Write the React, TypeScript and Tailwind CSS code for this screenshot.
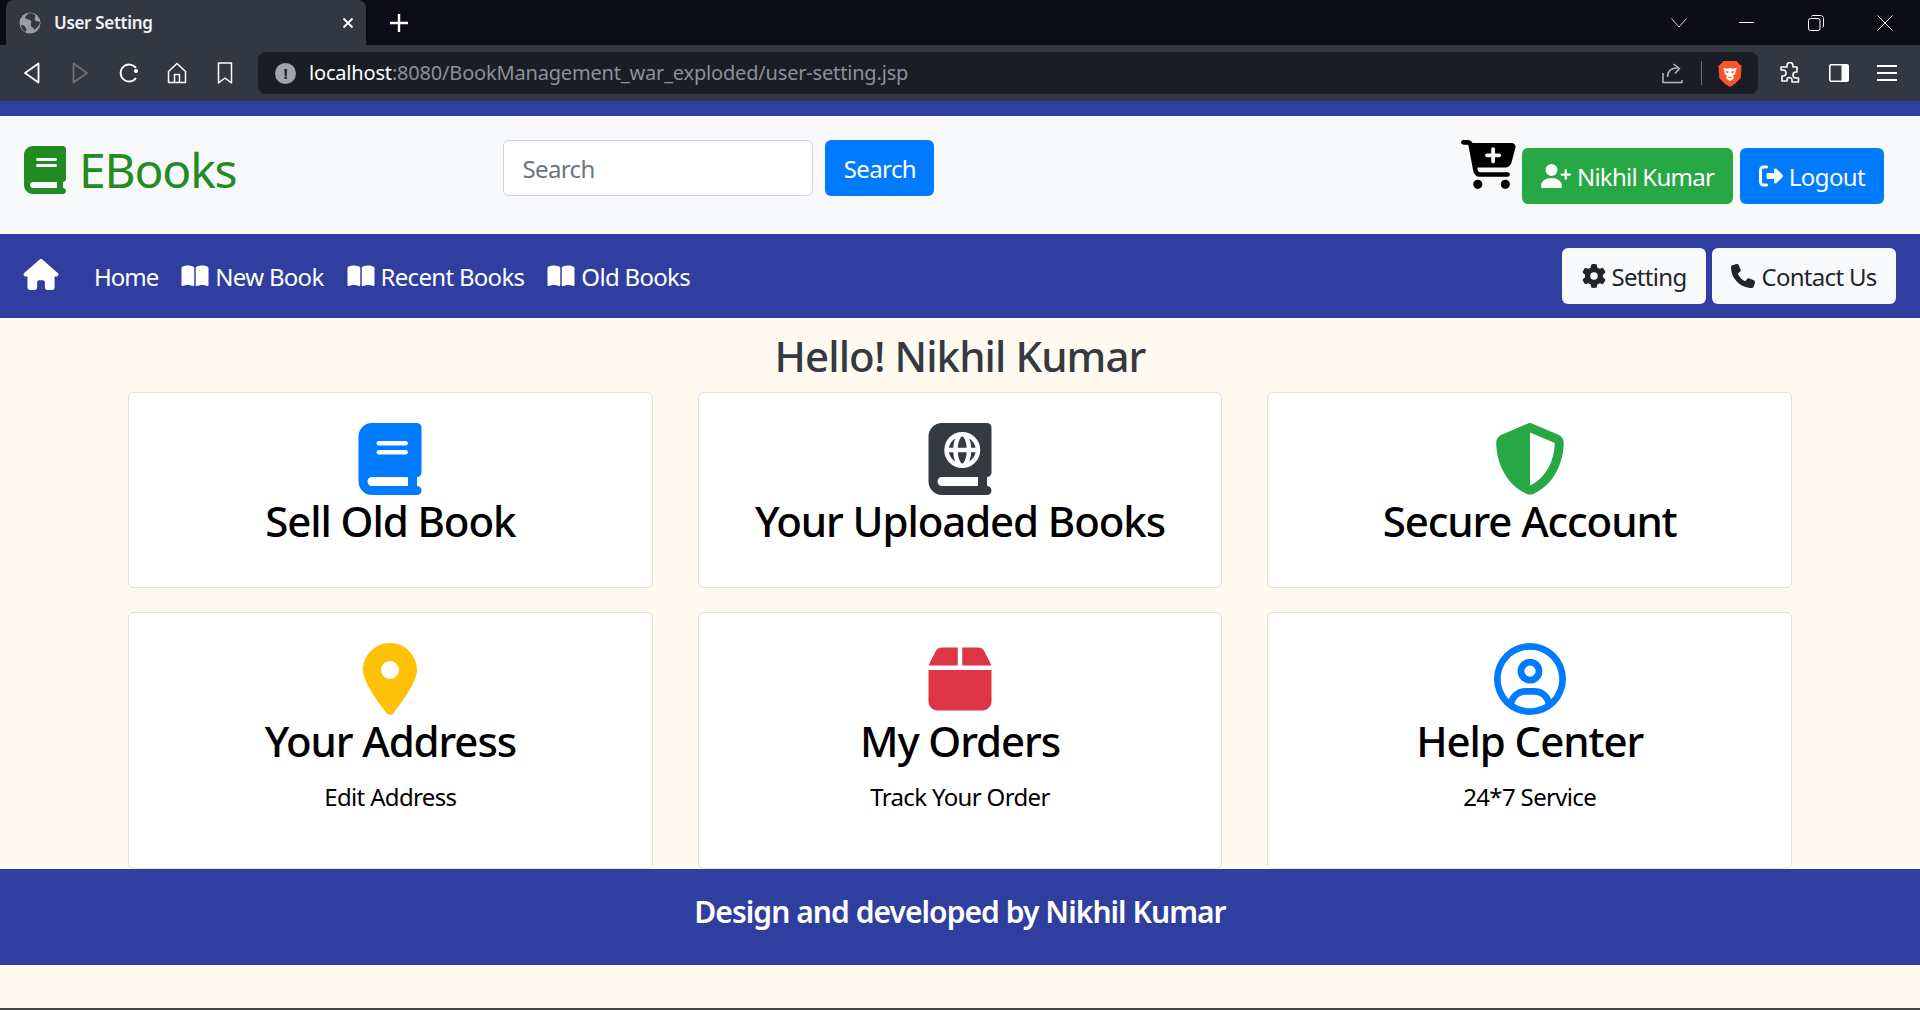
import React from 'react';
import {
  FaBook, FaBookAtlas, FaBookOpen, FaBox, FaCartPlus, FaGear, FaHouse, FaLocationDot, FaPhone,
  FaRegCircleUser, FaRightFromBracket, FaShieldHalved, FaUserPlus,
} from 'react-icons/fa6';

const NAV_LINKS = ['New Book', 'Recent Books', 'Old Books'];

const CARDS_TOP = [
  { title: 'Sell Old Book', icon: <FaBook className="text-[#007bff]" /> },
  { title: 'Your Uploaded Books', icon: <FaBookAtlas className="text-[#343a40]" /> },
  { title: 'Secure Account', icon: <FaShieldHalved className="text-[#28a745]" /> },
];

const CARDS_BOTTOM = [
  { title: 'Your Address', sub: 'Edit Address', icon: <FaLocationDot className="text-[#ffc107]" /> },
  { title: 'My Orders', sub: 'Track Your Order', icon: <FaBox className="text-[#dc3545]" /> },
  { title: 'Help Center', sub: '24*7 Service', icon: <FaRegCircleUser className="text-[#007bff]" /> },
];

function BrowserChrome() {
  return (
    <div className="font-['Noto_Sans',sans-serif]">
      <div className="h-[45px] bg-[#0b0c15] flex items-end pl-[6px] text-white">
        <div className="w-[360px] h-[45px] bg-[#333744] rounded-t-[8px] flex items-center pl-[13px] pr-[12px]">
          <svg viewBox="0 0 22 22" className="w-[22px] h-[22px]">
            <circle cx="11" cy="11" r="10.5" fill="#9a9da6" />
            <path d="M11 1c-3 1-5 3-5 5 2 2 5 1 6 3s-1 3 0 5 3 1 3 4c3-2 6-5 6-8 -2-1-4 0-5-2s1-3 0-5c-1-1-3-2-5-2zM2 13c2 0 4 1 5 3s0 3-1 4c-2-2-4-4-4-7z" fill="#333744" />
          </svg>
          <span className="ml-[13px] text-[17px] font-semibold tracking-[-0.3px] text-[#f2f2f4]">User Setting</span>
          <svg viewBox="0 0 12 12" className="ml-auto w-[12px] h-[12px]" fill="none" stroke="#fff" strokeWidth="1.8">
            <path d="M1.5 1.5l9 9M10.5 1.5l-9 9" />
          </svg>
        </div>
        <svg viewBox="0 0 18 18" className="ml-[24px] mb-[13px] w-[18px] h-[18px]" fill="none" stroke="#fff" strokeWidth="2.4">
          <path d="M9 0v18M0 9h18" />
        </svg>
        <div className="ml-auto h-[45px] flex items-center text-white">
          <svg viewBox="0 0 16 10" className="w-[16px] h-[10px]" fill="none" stroke="#d5d5d8" strokeWidth="1">
            <path d="M.5.5L8 9l7.5-8.5" />
          </svg>
          <div className="ml-[52px] w-[15px] h-[1px] bg-white" />
          <svg viewBox="0 0 16 16" className="ml-[54px] w-[16px] h-[16px]" fill="none" stroke="#fff" strokeWidth="1">
            <rect x=".5" y="3.5" width="11.5" height="12" rx="2" />
            <path d="M3.5 1.5c.3-.7.8-1 1.5-1h7.5c1.700 0 3 1.300 3 3v7.500c0 .7-.4 1.200-1 1.500" />
          </svg>
          <svg viewBox="0 0 16 16" className="ml-[53px] mr-[27px] w-[16px] h-[16px]" fill="none" stroke="#fff" strokeWidth="1">
            <path d="M.5.5l15 15M15.500.5l-15 15" />
          </svg>
        </div>
      </div>
      <div className="h-[56px] bg-[#333744] flex items-center pl-[23px]">
        <svg viewBox="0 0 18 24" className="w-[18px] h-[24px]" fill="none" stroke="#fff" strokeWidth="1.800" strokeLinejoin="round">
          <path d="M15.500 2.500v19L2 12z" />
        </svg>
        <svg viewBox="0 0 18 24" className="ml-[30px] w-[18px] h-[24px]" fill="none" stroke="#6f727d" strokeWidth="1.800" strokeLinejoin="round">
          <path d="M2.500 2.500v19L16 12z" />
        </svg>
        <svg viewBox="0 0 20 22" className="ml-[30px] w-[20px] h-[22px]" fill="none" stroke="#fff" strokeWidth="1.800">
          <path d="M17 16a8.500 8.500 0 1 1 0-10" />
          <circle cx="17" cy="9" r="1.200" fill="#fff" />
        </svg>
        <svg viewBox="0 0 20 22" className="ml-[28px] w-[20px] h-[22px]" fill="none" stroke="#fff" strokeWidth="1.500" strokeLinejoin="round">
          <path d="M1.500 9.500L10 1.500l8.500 8v11h-17zM7.500 20.500v-8h5v8" />
        </svg>
        <svg viewBox="0 0 16 22" className="ml-[30px] w-[16px] h-[22px]" fill="none" stroke="#fff" strokeWidth="1.500" strokeLinejoin="round">
          <path d="M1.500 1h13v20l-6.500-5-6.500 5z" />
        </svg>
        <div className="ml-[25px] w-[1500px] h-[42px] rounded-[8px] bg-[#1b1d24] flex items-center pl-[17px] pr-[16px]">
          <div className="w-[21px] h-[21px] rounded-full bg-[#a2a4ac] text-[#1b1d24] text-[15px] font-bold leading-[21px] text-center">!</div>
          <div className="ml-[13px] text-[20px] tracking-[-0.18px] text-[#8d9098]">
            <span className="text-white">localhost</span>:8080/BookManagement_war_exploded/user-setting.jsp
          </div>
          <svg viewBox="0 0 21 21" className="ml-auto w-[21px] h-[21px]" fill="none" stroke="#b9bbc0" strokeWidth="1.500">
            <path d="M1 10v9.500h19V17M5.500 14c0-6 4-9 10-9M11.500 1l6 4.500-4.500 5" />
          </svg>
          <div className="ml-[18px] w-[1px] h-[24px] bg-[#6b6d74]" />
          <svg viewBox="0 0 24 28" className="ml-[16px] w-[24px] h-[27px]">
            <path d="M5 1h14l2 2.500L24 6l-1 13-6 6-5 3-5-3-6-6L0 6l3-2.500z" fill="#fb542b" />
            <path d="M5 8l5 1 2-1 2 1 5-1-2 7-2 1 1 3-4 3-4-3 1-3-2-1z" fill="#fff" />
            <path d="M8 12l2.500 1M16 12l-2.500 1M10.500 18h3" stroke="#fb542b" strokeWidth="1.500" />
          </svg>
        </div>
        <svg viewBox="0 0 22 22" className="ml-[21px] w-[22px] h-[22px] shrink-0" fill="none" stroke="#fff" strokeWidth="1.600" strokeLinejoin="round">
          <path d="M8 3.500a3 3 0 0 1 6 0V5h4v5h-1a3 3 0 0 0 0 6h2.500v4H13v-2a2.500 2.500 0 0 0-5 0v1H3v-5h1a3 3 0 0 0 0-6H2V5h6z" />
        </svg>
        <svg viewBox="0 0 20 18" className="ml-[28px] w-[20px] h-[18px] shrink-0">
          <rect x=".8" y=".8" width="18.400" height="16.400" rx="1.500" fill="none" stroke="#fff" strokeWidth="1.600" />
          <rect x="12.500" y="1" width="7" height="16" fill="#fff" />
        </svg>
        <div className="ml-[28px] w-[20px] shrink-0 flex flex-col gap-[5px]">
          <div className="h-[2px] bg-white" />
          <div className="h-[2px] bg-white" />
          <div className="h-[2px] bg-white" />
        </div>
      </div>
    </div>
  );
}

function Header() {
  return (
    <div className="h-[118px] bg-[#f8f9fa] flex items-start pl-[21px] pr-[36px]">
      <div className="mt-[29px] flex items-center text-[#228b22]">
        <FaBook className="text-[48px]" />
        <span className="ml-[10px] text-[48px] leading-[50px] tracking-[-1.2px]">EBooks</span>
      </div>
      <div className="mt-[24px] ml-[267px] flex gap-[12px]">
        <div className="w-[310px] h-[56px] bg-white border border-[#ced4da] rounded-[6px] pl-[18px] pt-[2px] flex items-center text-[24px] tracking-[-0.6px] text-[#6c757d]">Search</div>
        <button className="w-[109px] h-[56px] bg-[#007bff] rounded-[6px] pt-[2px] text-[24px] tracking-[-0.6px] text-white">Search</button>
      </div>
      <div className="ml-auto flex items-start">
        <FaCartPlus className="mt-[21px] text-[55px] text-black" />
        <button className="mt-[32px] ml-[6px] w-[211px] h-[56px] pt-[2px] bg-[#28a745] rounded-[6px] flex items-center justify-center gap-[6px] text-[24px] tracking-[-0.75px] text-white">
          <FaUserPlus className="text-[30px] mb-[2px]" /> Nikhil Kumar
        </button>
        <button className="mt-[32px] ml-[7px] w-[144px] h-[56px] pt-[2px] bg-[#007bff] rounded-[6px] flex items-center justify-center gap-[6px] text-[24px] tracking-[-0.6px] text-white">
          <FaRightFromBracket className="text-[24px] mb-[2px]" /> Logout
        </button>
      </div>
    </div>
  );
}

function NavBar() {
  return (
    <div className="h-[84px] bg-[#303f9f] flex items-center pl-[23px] pr-[24px] text-[24px] tracking-[-0.7px] text-white">
      <FaHouse className="text-[31px] w-[36px] mb-[4px]" />
      <span className="ml-[35px] pt-[2px] tracking-[-1px]">Home</span>
      {NAV_LINKS.map((link) => (
        <span key={link} className="ml-[23px] pt-[2px] flex items-center gap-[6px]">
          <FaBookOpen className="text-[24px] w-[28px] mb-[2px]" /> {link}
        </span>
      ))}
      <button className="ml-auto w-[144px] h-[56px] pt-[2px] bg-[#f8f9fa] rounded-[6px] flex items-center justify-center gap-[6px] text-[#212529]">
        <FaGear className="text-[24px] mb-[2px]" /> Setting
      </button>
      <button className="ml-[6px] w-[184px] h-[56px] pt-[2px] bg-[#f8f9fa] rounded-[6px] flex items-center justify-center gap-[6px] text-[#212529]">
        <FaPhone className="text-[24px] mb-[2px]" /> Contact Us
      </button>
    </div>
  );
}

function Card({ title, sub, icon }: { title: string; sub?: string; icon: React.ReactNode }) {
  return (
    <div className="bg-white border border-[#e0e0e0] rounded-[6px] pt-[30px] flex flex-col items-center text-black">
      <div className="h-[72px] text-[72px] leading-none">{icon}</div>
      <h3 className="mt-[1px] text-[42px] leading-[50px] font-medium tracking-[-1.1px]">{title}</h3>
      {sub && <p className="mt-[13px] text-[24px] leading-[36px] tracking-[-0.65px]">{sub}</p>}
    </div>
  );
}

export default function App() {
  return (
    <div className="h-[1010px] overflow-hidden flex flex-col bg-[#fffaf0] font-['Noto_Sans',sans-serif]">
      <BrowserChrome />
      <div className="h-[15px] bg-[#303f9f]" />
      <Header />
      <NavBar />
      <h3 className="mt-[13px] text-center text-[42px] leading-[50px] font-medium tracking-[-0.9px] text-[#343a40]">Hello! Nikhil Kumar</h3>
      <div className="mt-[11px] px-[128px] grid grid-cols-3 gap-x-[45px] gap-y-[24px] grid-rows-[196px_257px]">
        {CARDS_TOP.map((card) => <Card key={card.title} {...card} />)}
        {CARDS_BOTTOM.map((card) => <Card key={card.title} {...card} />)}
      </div>
      <div className="h-[96px] bg-[#303f9f] pt-[22px] text-center text-[30px] leading-[42px] font-semibold tracking-[-0.95px] text-white">
        Design and developed by Nikhil Kumar
      </div>
      <div className="flex-1" />
      <div className="h-[2px] bg-[#444]" />
    </div>
  );
}
